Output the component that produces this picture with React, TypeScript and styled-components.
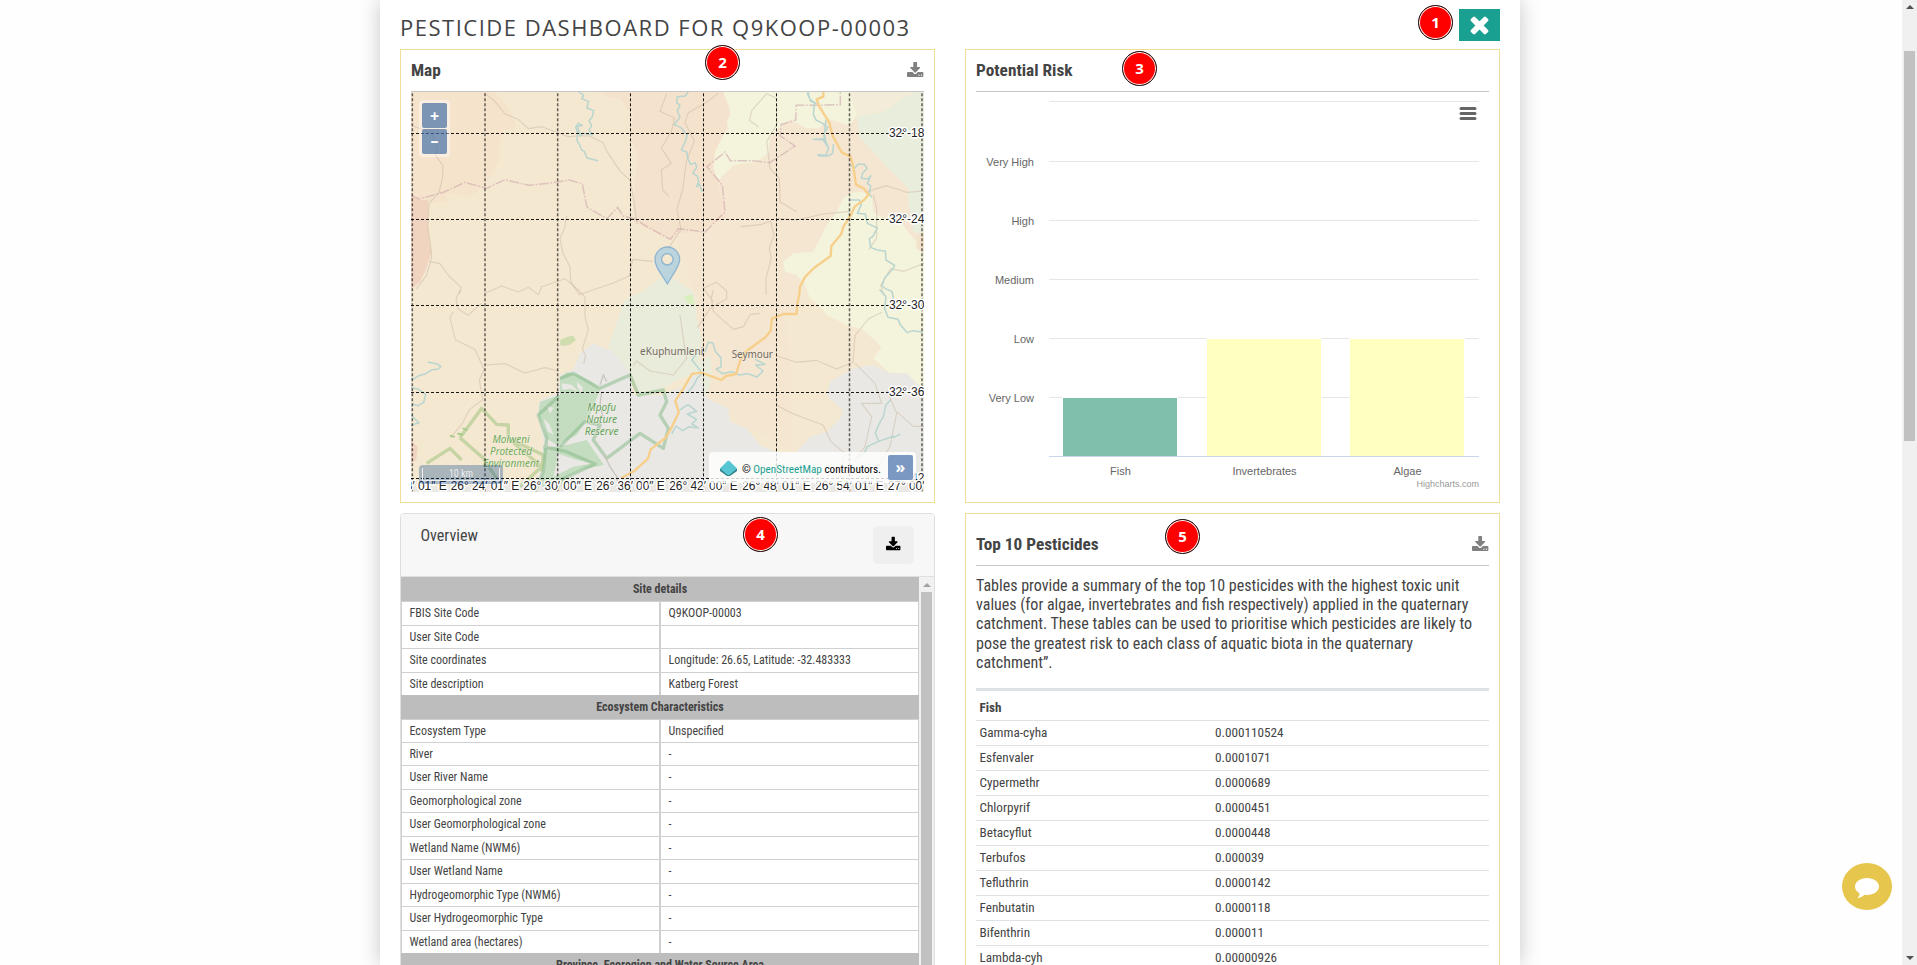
import React from "react";
import styled, { createGlobalStyle } from "styled-components";

const COND = `"Roboto Condensed", Roboto, "Liberation Sans", sans-serif`;

const Global = createGlobalStyle`
  * { box-sizing: border-box; }
  html, body { margin: 0; padding: 0; overflow: hidden; background: #fff; }
  body { font-family: ${COND}; font-stretch: 75%; color: #444; font-size: 16px; }
`;

const Page = styled.div`
  position: relative;
  display: flex;
  width: 1917px;
  height: 965px;
  overflow: hidden;
`;
const Backdrop = styled.div`
  flex: 1;
  display: flex;
  padding-left: 380px;
  background: #fefefe;
`;
const Modal = styled.main`
  width: 1140px;
  height: 965px;
  padding: 0 20px;
  background: #fff;
  box-shadow: 0 0 20px rgba(0, 0, 0, 0.22);
`;
const TitleBar = styled.header`
  display: flex;
  justify-content: space-between;
  height: 49px;
`;
const Title = styled.h1`
  margin: 11px 0 0;
  font: 400 22px/32px "Open Sans", "Noto Sans", sans-serif;
  font-stretch: 88%;
  letter-spacing: 1.5px;
  white-space: nowrap;
  color: #444;
`;
const CloseButton = styled.button`
  display: flex;
  align-items: center;
  justify-content: center;
  width: 41px;
  height: 32px;
  margin-top: 9px;
  padding: 0 0 1px;
  border: 0;
  background: #1aa090;
  color: #fff;
`;
const Columns = styled.div`
  display: grid;
  grid-template-columns: 535px 535px;
  column-gap: 30px;
  row-gap: 10px;
  grid-template-rows: 454px 600px;
`;
const Panel = styled.section`
  border: 1px solid #f0de94;
  padding: 0 10px;
`;
const PanelHead = styled.div<{ $tall?: boolean }>`
  display: flex;
  justify-content: space-between;
  align-items: center;
  height: ${(p) => (p.$tall ? 52 : 42)}px;
  padding-top: ${(p) => (p.$tall ? 10 : 0)}px;
  border-bottom: 1px solid #c6c6c6;
  color: #808080;
  svg { margin-top: -2px; }
`;
const PanelTitle = styled.h2`
  margin: -2px 0 0;
  font-size: 17.3px;
  line-height: 20px;
  font-weight: 700;
  color: #444;
`;

const MapBox = styled.div`
  position: relative;
  width: 513px;
  height: 400px;
  overflow: hidden;
`;
const MapSvg = styled.svg`
  display: block;
`;
const ZoomControl = styled.div`
  position: absolute;
  left: 8px;
  top: 8px;
  display: flex;
  flex-direction: column;
  gap: 1px;
  padding: 3px;
  border-radius: 4px;
  background: rgba(255, 255, 255, 0.4);
`;
const MapButton = styled.button<{ $tone?: string; $lift?: number }>`
  flex: none;
  width: 25px;
  height: 25px;
  padding: 0 0 ${(p) => p.$lift ?? 0}px;
  border: 0;
  border-radius: 2px;
  background: ${(p) => p.$tone ?? "rgba(0,60,136,0.5)"};
  color: #fff;
  font: 700 16px/22px "Open Sans", sans-serif;
`;
const ScaleBar = styled.div`
  position: absolute;
  left: 8px;
  top: 373px;
  width: 84px;
  height: 19px;
  padding: 3px;
  border-radius: 4px;
  background: rgba(0, 60, 136, 0.3);
`;
const ScaleInner = styled.div`
  height: 13px;
  border: 1px solid #eee;
  border-top: 0;
  color: #eee;
  font-size: 10px;
  line-height: 12px;
  text-align: center;
`;
const Attribution = styled.div`
  position: absolute;
  left: 298px;
  top: 360px;
  display: flex;
  align-items: center;
  width: 207px;
  height: 31px;
  padding: 0 3px 1px 11px;
  border-radius: 4px 4px 0 0;
  background: rgba(255, 255, 255, 0.8);
  color: #000;
  font-size: 11.2px;
  white-space: nowrap;
  button { margin-left: auto; }
`;
const AttrText = styled.span`
  margin: 5px 0 0 5px;
  b { font-weight: 400; color: #1aa090; }
`;

const Card = styled.section`
  border: 1px solid #dfdfdf;
  border-radius: 4px;
  overflow: hidden;
`;
const CardHead = styled.div`
  display: flex;
  justify-content: space-between;
  height: 63px;
  padding: 12px 20px 0 19.5px;
  border-bottom: 1px solid #dfdfdf;
  background: #f7f7f7;
`;
const CardTitle = styled.div`
  line-height: 19px;
`;
const SaveButton = styled.button`
  display: flex;
  align-items: center;
  justify-content: center;
  width: 41px;
  height: 38px;
  padding: 0 0 3px;
  border: 0;
  border-radius: 5px;
  background: #efefef;
  color: #000;
`;
const CardBody = styled.div`
  display: flex;
`;
const Details = styled.div`
  width: 518px;
  font-size: 12px;
`;
const GroupRow = styled.div`
  height: 23.45px;
  background: #bdbdbd;
  line-height: 24px;
  font-weight: 700;
  text-align: center;
  &:first-child { height: 24.4px; }
`;
const DetailRow = styled.div`
  display: grid;
  grid-template-columns: 259px 259px;
  height: 23.45px;
  line-height: 22px;
`;
const DetailCell = styled.div`
  border: 1px solid #d0d0d0;
  border-bottom: 0;
  padding-left: 7.5px;
  white-space: nowrap;
`;
const Track = styled.div<{ $w: number }>`
  display: flex;
  flex-direction: column;
  align-items: center;
  width: ${(p) => p.$w}px;
  background: #f1f1f1;
`;
const Arrow = styled.i<{ $down?: boolean; $inset?: boolean; $c: string }>`
  margin-top: ${(p) => (p.$inset ? 6 : 0)}px;
  border: 4px solid transparent;
  ${(p) => (p.$down ? `border-top-color: ${p.$c}; border-bottom: 0;` : `border-bottom-color: ${p.$c}; border-top: 0;`)}
`;
const InnerThumb = styled.div`
  width: 11px;
  flex: 1;
  margin-top: 5px;
  background: #c1c1c1;
`;
const PageTrack = styled(Track)`
  padding: 5px 0;
  height: 965px;
  background: #f0f0f0;
`;
const PageThumb = styled.div`
  width: 11px;
  height: 390px;
  margin: 42px 0 auto;
  background: #c1c1c1;
`;

const Blurb = styled.p`
  margin: 10px 0 16px;
  line-height: 19.2px;
`;
const PestTable = styled.div`
  border-top: 3px solid #dee2e6;
  font-size: 13.2px;
`;
const PestRow = styled.div<{ $head?: boolean }>`
  display: grid;
  grid-template-columns: 235.5px 1fr;
  height: ${(p) => (p.$head ? 30 : 25)}px;
  padding: ${(p) => (p.$head ? 5 : 0)}px 0 0 3.5px;
  border-bottom: 1px solid #dee2e6;
  line-height: 23px;
  font-weight: ${(p) => (p.$head ? 700 : 400)};
`;

const Badge = styled.div<{ $x: number; $y: number }>`
  position: absolute;
  left: ${(p) => p.$x - 17.5}px;
  top: ${(p) => p.$y - 17.5}px;
  width: 35px;
  height: 35px;
  border: 1.5px solid #111;
  border-radius: 50%;
  background: #f00;
  box-shadow: inset 0 0 0 1px #fff;
  color: #fff;
  font: 700 15px/32px "Open Sans", sans-serif;
  text-align: center;
`;
const Chat = styled.div`
  position: absolute;
  left: 1842px;
  top: 863px;
  width: 50px;
  height: 47px;
  border-radius: 50%;
  background: #e6c64c;
`;

const Download = ({ size }: { size: number }) => (
  <svg width={size} height={size} viewBox="64 -100 1728 1728" fill="currentColor" overflow="visible">
    <path d="M1344 1344q0-26-19-45t-45-19-45 19-19 45 19 45 45 19 45-19 19-45zm256 0q0-26-19-45t-45-19-45 19-19 45 19 45 45 19 45-19 19-45zm128-224v320q0 40-28 68t-68 28h-1472q-40 0-68-28t-28-68v-320q0-40 28-68t68-28h465l135 136q58 56 136 56t136-56l136-136h464q40 0 68 28t28 68zm-325-569q17 41-14 70l-448 448q-18 19-45 19t-45-19l-448-448q-31-29-14-70 17-39 59-39h256v-448q0-26 19-45t45-19h256q26 0 45 19t19 45v448h256q42 0 59 39z" />
  </svg>
);

const RIVERS = [
  "M537 21l14 10-6 10 20 8-4 20 20 8-4 18-10 12 8 14-8 14 10 14-30-4-6 8-8-28 14-4-12-6-8 12 6 16-2 24 8 12 6 16 8 4 8 20 16 4 16 4",
  "M864 21l-8 12-24 2-2 18 10 8-8 16 8 20-18 22 20 8 20 24-6 18-12 26 16 6 4 22 8 16 14-6 4 14-12 18 14 8 4 18-6 14 8-8 8 22",
  "M1224 21l6 22 14 10-4 34 8 18 20 10 16 12-12 18 4 16-36 2 30 2 16 24-8 22-24-2 4 4 26 0 14-8 2-26M1222 25l10 24 16 6M1278 105l-6 50 12 30",
  "M1352 240l12 10 10-12 18 0 10 12-14 14-4 16 20 2 8-10-10 24 10 6-4 22 6 12",
  "M1350 345l28 0 6 14-12 26 24 2 6 28 30 14-14 26-10 6 4 26 20 8 24 4 2 26 26 16-6 12-24 26-8 24 10 8 20 8 4 20-10 10",
  "M1440 615l18 20-4 36 10 26 30 6 8 18 20 22 16-6 28 4",
  "M85 832l24 4 14 8-8 8-18 2-20 12-20 6-14 8-16 6M33 908l20 4 24 16-6 24-16 10-14-4-8 6M33 990l24 24-24 6",
  "M915 800l10-28 14 2 6 24 18 20 0 28-14 6 18 14 28-6 24 10 24-4 28 10 18-18-22-18 28-2-28-14",
  "M890 805l-14 20 16 20 14 20-14 14-10 20-16 20M840 975l24-16 26 20-28 8 28 16-14 14 18 12-26-4-20 12-20-14-12 22",
  "M1472 945l-14 14-8 36-14 24-10 26 10 24-34 16-10 20-20 12M1434 1070l46-16 M1480 1058l20-10",
];
const TRACKS = [
  "M255 25l30 24 30 38 40 16 30 28 40-6 50 18 30 12 30-2 34 0 40 20 14 30 38 56 30 28 12 70 8 60",
  "M33 120l60 24 18 34-4 34 22 30-2 40-10 40-30 34-4 70 8 50 4 40-16 56-30 40",
  "M90 530l30 6 24 34 40 38-6 20",
  "M500 393l-6 36-14 30 8 44 22 42 2 44 26 40 40-14 60-20 50-22 10-50 60 6",
  "M255 625l50-22 50 18 30-14 30 22 10-24 70-24 40 34 20 22 0 60 10 36-18 60 10 20-6 24",
  "M180 615l-12 26 6 30 30 20 40-36M160 680l-10 18 16 66 60 30 26 60-14 30 10 60-40 30-20 40-36 44",
  "M255 840l60-4 60 28 60-16 40 10",
  "M955 25l-40 30-50 28-10 30 28 56-24 60-10 80-18 64 12 60-20 30-20 30M800 25l-20 54 44 20-10 40-30 50 30 46-30 20 4 60 20 20",
  "M1130 40l-30-14-44 50-8 30 28 20M1130 60l0 60-30 50 10 80 28 30 2 70 50 30M1022 425l60-6 30-10 10 40-14 40 6 30-16 60 0 50M1130 400l60 5 80-18 80-8",
  "M1400 320l60-18 60 20 52-4M1420 330l10 40 0 90-24 34M1572 535l-60 24-40-8-30 50 10 30",
  "M940 650l-30-40 40-18 30 26 0 24-48 26-40 60M940 615l-6 24 6 40 60 54 30-8 20-36 30-4",
  "M1129 812l60 20 60-6 60 26 50-20 6-80 40-50 40-20",
  "M1129 960l50 26 90 34 24 50 40 34-10 60M1365 835l60 60 20 60-60 0 30 40-20 90-30 40M1460 915l30 70-20 100-30 50M1490 980l50 44 32 0",
  "M700 840l10-12 40 30 70 12 40-50-10-60-10-70",
];
const BOUNDS = [
  "M33 332l25 10 72-20 65-30 65 18 55-26 72 17 72-8 50-8 38 12 14 70 60 34 32-34 16 26 34 8 38 24 70 38 24-32 80 10 60-60-8-80-46-56 54-44 16 26 68 0 50 6 76-50-44-30 2-34 44-14 2-44 60 0 72-2 0-46",
];

const LON = ["26° 18′ 01″ E", "26° 24′ 01″ E", "26° 30′ 00″ E", "26° 36′ 00″ E", "26° 42′ 00″ E", "26° 48′ 01″ E", "26° 54′ 01″ E", "27° 00′ 00″ E"];
const LON_X = [37, 255, 473, 691.5, 910.5, 1129.5, 1348.5, 1566];
const LAT = [["32°-18", 145.5], ["32°-24", 403.5], ["32°-30", 661.5], ["32°-36", 922.5], ["32°-42", 1180.5]] as const;

const MapDrawing = () => (
  <MapSvg width="513" height="400">
    <rect width="513" height="400" fill="#f4e8d1" />
    <g transform="translate(-11 -7) scale(0.33333)">
      <path fill="#f5e3cc" d="M33 21H285L320 60 345 110 345 130 310 135 300 165 300 220 280 260 255 300 210 335 140 325 140 350 100 355 33 340z" />
      <path fill="#f0d4c0" d="M33 335L60 345 85 345 83 410 88 470 95 500 75 560 60 590 33 615z" />
      <path fill="#f5e2cc" d="M600 21L620 35 660 40 680 70 700 90 690 150 715 210 705 290 700 410 760 440 810 463 835 445 920 450 975 400 990 380 985 350 970 300 940 265 955 240 945 200 970 150 985 110 990 90 970 21z" />
      <path fill="#f4e6d1" d="M950 290L1000 250 1100 235 1110 150 1180 105 1300 120 1370 100 1540 310 1560 470 1260 470 1190 600 1200 650 1160 700 1180 1100 900 940 890 640 830 460 980 400z" />
      <path fill="#f4f3dc" d="M970 21L990 70 990 90 980 110 985 130 965 160 945 200 940 250 955 285 970 270 1000 240 1070 230 1105 205 1110 160 1135 130 1170 105 1220 130 1260 130 1280 100 1350 122 1370 90 1350 21z" />
      <path fill="#f3ecd8" d="M1350 21H1550L1460 75 1372 95z" />
      <path fill="#e9eddc" d="M1370 95L1430 85 1460 75 1510 40 1550 21 1572 21 1572 450 1540 440 1525 350 1525 310 1470 255 1420 200 1380 160z" />
      <path fill="#f4f3dc" d="M1350 325L1330 340 1310 380 1280 420 1260 460 1240 500 1180 505 1150 530 1155 560 1190 570 1215 600 1230 640 1260 665 1280 690 1340 720 1390 735 1445 785 1420 820 1470 865 1520 865 1572 915 1572 510 1550 470 1520 435 1490 390 1450 400 1420 380 1415 330 1380 320z" />
      <path fill="#f4e3cc" d="M1552 450L1572 440V505L1548 490z" />
      <path fill="#e9e8e4" d="M580 775L540 805 520 855 480 870 475 925 420 945 412 985 430 1065 425 1150 400 1200 33 1205 33 1221 1572 1221 1572 915 1520 865 1470 865 1420 840 1360 850 1290 890 1280 930 1310 960 1330 975 1320 1000 1280 1040 1230 1055 1190 1100 1150 1110 1080 1080 1040 1030 990 1010 985 970 930 945 915 930 900 840 860 900 780 930 700 930 690 860 640 800z" />
      <path fill="#e9ecda" d="M720 625L790 575 830 585 880 620 885 640 890 700 905 760 900 830 930 810 935 860 930 900 915 940 900 860 820 890 780 920 720 935 700 880 640 800 625 785 655 700 670 650 700 630z" />
      <path fill="#cfdcae" d="M480 766l20-10 20-4 8 14-20 14-26 2z" />
      <path fill="#d9efbd" d="M852 635l26-8 6 34-22-8z" />
      <path fill="#f0d4c0" d="M33 1065l20 20-4 40-16 10z" />
      <path fill="#c4dcc0" d="M480 880L500 862 530 868 580 895 600 915 570 990 555 1010 530 1050 470 1080 440 1060 432 1020 415 990 420 950 480 930z" />
      <path fill="#c4dcc0" d="M430 1090L500 1080 560 1065 612 1140 540 1155 500 1175 470 1221 420 1200 435 1150z" />
      <path fill="#e9e8e4" d="M485 895l30 4 20 20-24-8-24 4zM530 890l18 16-2 20-14-20zM440 960l20 10-10 16zM430 1000l20 20 10 30-18-12zM470 1105l60 20 50 10-60 10-60 30 10-40z" />
      <g fill="none" stroke="#83b887" strokeOpacity="0.5" strokeWidth="10" strokeLinejoin="round">
        <path d="M480 880L520 865 600 910 690 870 715 930 790 915 800 950 780 990 805 1030 790 1090 720 1045 620 1120 580 1065 600 1020 555 1010 480 1085M475 935L415 990 440 1060 430 1160 405 1221M430 1085L500 1100 585 1137 470 1190" />
        <path stroke="#98c078" d="M80 1135L150 1090 185 1125M180 1058L245 970 290 1018 325 1020 325 1060 425 1145 360 1205M180 1058L250 1120 290 1180M325 1060L430 1110 425 1160" />
      </g>
      <path fill="none" stroke="#9fcb84" strokeWidth="5" d="M150 1052l14 4m8-10l16 2m0-18l14 6" />
      {TRACKS.map((d) => <path key={d} d={d} fill="none" stroke="#c9b5a4" strokeOpacity=".48" strokeWidth="3.4" strokeLinejoin="round" />)}
      {BOUNDS.map((d) => (
        <path key={d} d={d} fill="none" stroke="#cfa9ad" strokeOpacity=".6" strokeWidth="4.5" strokeDasharray="30 5 5 5" />
      ))}
      {RIVERS.map((d) => <path key={d} d={d} fill="none" stroke="#b8d5cf" strokeWidth="4.5" strokeLinejoin="round" strokeLinecap="round" />)}
      <path fill="none" stroke="#f7cf8a" strokeWidth="7" strokeLinejoin="round" d="M1270 21l0 14-20 8 8 22 30 48 10 40 28 50 26 12 8 30 8 54 24 12 14 18-14 16-28 20-14 30-20 30-6 22-30 36-2 30-50 36-26 26-16 30-2 22-6 30-2 30-40 0-34 14-4 36-16 20-60 44-14 22-14 44-30 6-14 12-60-22-28 4-26 44-24 36 10 36-24 50-16 26-44 34-8 28-40 36-40 22" />
      <path fill="none" stroke="#c9c5bf" strokeWidth="4" d="M610 1105l20 40 20 30 10 46M600 900l10-30 10 20M605 920l-5 40 10 40" />
      <path fill="#9cc9e4" fillOpacity=".65" stroke="#7fabcf" strokeOpacity=".8" strokeWidth="4" fillRule="evenodd" d="M802 597C780 560 765 545 765 523A37 37 0 1 1 839 523C839 545 822 560 802 597zM802 506a17 17 0 1 0 .1 0z" />
      <g fontFamily="'Noto Sans', sans-serif" fontSize="30" stroke="#f3ecdf" strokeWidth="4" paintOrder="stroke" strokeOpacity=".7">
        <text x="720" y="809" fill="#706c65" textLength="190">eKuphumleni</text>
        <text x="995" y="818" fill="#736a5e" textLength="124">Seymour</text>
        <g fill="#5fa564" fontStyle="italic" textAnchor="middle">
          <text x="605" y="978">Mpofu</text><text x="605" y="1013">Nature</text><text x="605" y="1049">Reserve</text>
          <g fill="#73ae5c"><text x="333" y="1074">Molweni</text><text x="333" y="1110">Protected</text><text x="333" y="1146">Environment</text></g>
        </g>
      </g>
      <g stroke="#000" strokeDasharray="9 6">
        {LON_X.map((x) => {
          const sharp = x > 600 && x < 1300;
          return <path key={x} d={`M${x} 25V1221`} strokeWidth={sharp ? 3 : 4.5} strokeOpacity={sharp ? 0.92 : 0.6} />;
        })}
        {LAT.map(([t, y]) => <path key={t} d={`M33 ${y}H1572`} strokeWidth="3" strokeOpacity=".92" />)}
      </g>
      <g fontFamily="'Liberation Sans', sans-serif" fontSize="36" fill="#222" stroke="#fff" strokeWidth="9" strokeLinejoin="round" paintOrder="stroke">
        {LAT.map(([t, y]) => <text key={t} x="1573" y={y + 10} textAnchor="end">{t}</text>)}
        {LON.map((t, i) => <text key={i} x={LON_X[i]} y="1214" textAnchor="middle" textLength="206">{t}</text>)}
      </g>
    </g>
  </MapSvg>
);

const GRID: [string, number][] = [["", 9], ["Very High", 69], ["High", 128], ["Medium", 187], ["Low", 246], ["Very Low", 305]];
const BARS: [string, number, number, string][] = [["Fish", 87, 305, "#80bfab"], ["Invertebrates", 231, 246, "#ffffbf"], ["Algae", 374, 246, "#ffffbf"]];

const Chart = () => (
  <svg width="513" height="400" fontFamily="'Liberation Sans', sans-serif" fontSize="11" fill="#666">
    {GRID.map(([t, y]) => (
      <g key={y}>
        <path d={`M73 ${y + 0.5}H503`} stroke="#e6e6e6" />
        <text x="58" y={y + 5} textAnchor="end">{t}</text>
      </g>
    ))}
    {BARS.map(([t, x, y, c]) => (
      <g key={t}>
        <rect x={x - 0.5} y={y + 0.5} width="115" height={364 - y} fill={c} stroke="#fff" />
        <text x={x + 57.5} y="383" textAnchor="middle">{t}</text>
      </g>
    ))}
    <path d="M73 364.5H503" stroke="#ccd6eb" />
    <path d="M485 16.500h14M485 21.500h14M485 26.500h14" stroke="#666" strokeWidth="3" strokeLinecap="round" />
    <text x="503" y="395" textAnchor="end" fontSize="9" fill="#999">Highcharts.com</text>
  </svg>
);

const DETAILS: [string, string?][] = [
  ["Site details"], ["FBIS Site Code", "Q9KOOP-00003"], ["User Site Code", ""],
  ["Site coordinates", "Longitude: 26.65, Latitude: -32.483333"], ["Site description", "Katberg Forest"],
  ["Ecosystem Characteristics"], ["Ecosystem Type", "Unspecified"], ["River", "-"], ["User River Name", "-"],
  ["Geomorphological zone", "-"], ["User Geomorphological zone", "-"], ["Wetland Name (NWM6)", "-"],
  ["User Wetland Name", "-"], ["Hydrogeomorphic Type (NWM6)", "-"], ["User Hydrogeomorphic Type", "-"],
  ["Wetland area (hectares)", "-"], ["Province, Ecoregion and Water Source Area"],
];
const PESTS = [
  ["Gamma-cyha", "0.000110524"], ["Esfenvaler", "0.0001071"], ["Cypermethr", "0.0000689"], ["Chlorpyrif", "0.0000451"],
  ["Betacyflut", "0.0000448"], ["Terbufos", "0.000039"], ["Tefluthrin", "0.0000142"], ["Fenbutatin", "0.0000118"],
  ["Bifenthrin", "0.000011"], ["Lambda-cyh", "0.00000926"],
];
const BADGES = [[1435.5, 22.5], [722.5, 62.5], [1139.5, 68.5], [760.5, 534.5], [1182.5, 536.5]];

export default function App() {
  return (
    <Page>
      <Global />
      <Backdrop>
        <Modal>
          <TitleBar>
            <Title>PESTICIDE DASHBOARD FOR Q9KOOP-00003</Title>
            <CloseButton>
              <svg width="27" height="27" viewBox="0 0 1792 1792" fill="currentColor">
                <path d="M1490 1322q0 40-28 68l-136 136q-28 28-68 28t-68-28l-294-294-294 294q-28 28-68 28t-68-28l-136-136q-28-28-28-68t28-68l294-294-294-294q-28-28-28-68t28-68l136-136q28-28 68-28t68 28l294 294 294-294q28-28 68-28t68 28l136 136q28 28 28 68t-28 68l-294 294 294 294q28 28 28 68z" />
              </svg>
            </CloseButton>
          </TitleBar>
          <Columns>
            <Panel>
              <PanelHead><PanelTitle>Map</PanelTitle><Download size={17} /></PanelHead>
              <MapBox>
                <MapDrawing />
                <ZoomControl><MapButton>+</MapButton><MapButton $lift={4}>–</MapButton></ZoomControl>
                <ScaleBar><ScaleInner>10 km</ScaleInner></ScaleBar>
                <Attribution>
                  <svg width="17" height="18" viewBox="0 0 17 18">
                    <path d="M0 11L8.500 4 17 11v2L10 18H7L0 13z" fill="#35808c" />
                    <path d="M0 10.500L7 3.500q1.500-1.500 3 0L17 10.500l-7 6q-1.500 1-3 0z" fill="#57c6d3" />
                  </svg>
                  <AttrText>© <b>OpenStreetMap</b> contributors.</AttrText>
                  <MapButton $tone="#7b98c2">»</MapButton>
                </Attribution>
              </MapBox>
            </Panel>
            <Panel>
              <PanelHead><PanelTitle>Potential Risk</PanelTitle></PanelHead>
              <Chart />
            </Panel>
            <Card>
              <CardHead>
                <CardTitle>Overview</CardTitle>
                <SaveButton><Download size={15} /></SaveButton>
              </CardHead>
              <CardBody>
                <Details>
                  {DETAILS.map(([label, value]) =>
                    value === undefined ? (
                      <GroupRow key={label}>{label}</GroupRow>
                    ) : (
                      <DetailRow key={label}><DetailCell>{label}</DetailCell><DetailCell>{value}</DetailCell></DetailRow>
                    )
                  )}
                </Details>
                <Track $w={15}>
                  <Arrow $c="#a3a3a3" $inset />
                  <InnerThumb />
                </Track>
              </CardBody>
            </Card>
            <Panel>
              <PanelHead $tall><PanelTitle>Top 10 Pesticides</PanelTitle><Download size={17} /></PanelHead>
              <Blurb>
                Tables provide a summary of the top 10 pesticides with the highest toxic unit values (for algae, invertebrates and fish respectively) applied in the quaternary catchment. These tables can be used to prioritise which pesticides are likely to pose the greatest risk to each class of aquatic biota in the quaternary catchment”.
              </Blurb>
              <PestTable>
                <PestRow $head><span>Fish</span></PestRow>
                {PESTS.map(([name, value]) => (
                  <PestRow key={name}><span>{name}</span><span>{value}</span></PestRow>
                ))}
              </PestTable>
            </Panel>
          </Columns>
        </Modal>
      </Backdrop>
      <PageTrack $w={15}>
        <Arrow $c="#505050" />
        <PageThumb />
        <Arrow $down $c="#505050" />
      </PageTrack>
      {BADGES.map(([x, y], i) => <Badge key={i} $x={x} $y={y}>{i + 1}</Badge>)}
      <Chat>
        <svg width="50" height="47" fill="#fff">
          <path d="M25 15c6.700 0 12 3.700 12 8.500S31.700 32 25 32c-1 0-1.600 0-2.400-.2-2 1.700-4.600 3-7.400 3.600 1.300-1.400 2.200-3 2.500-5C14.700 28.900 13 26.400 13 23.500 13 18.700 18.300 15 25 15z" />
        </svg>
      </Chat>
    </Page>
  );
}
